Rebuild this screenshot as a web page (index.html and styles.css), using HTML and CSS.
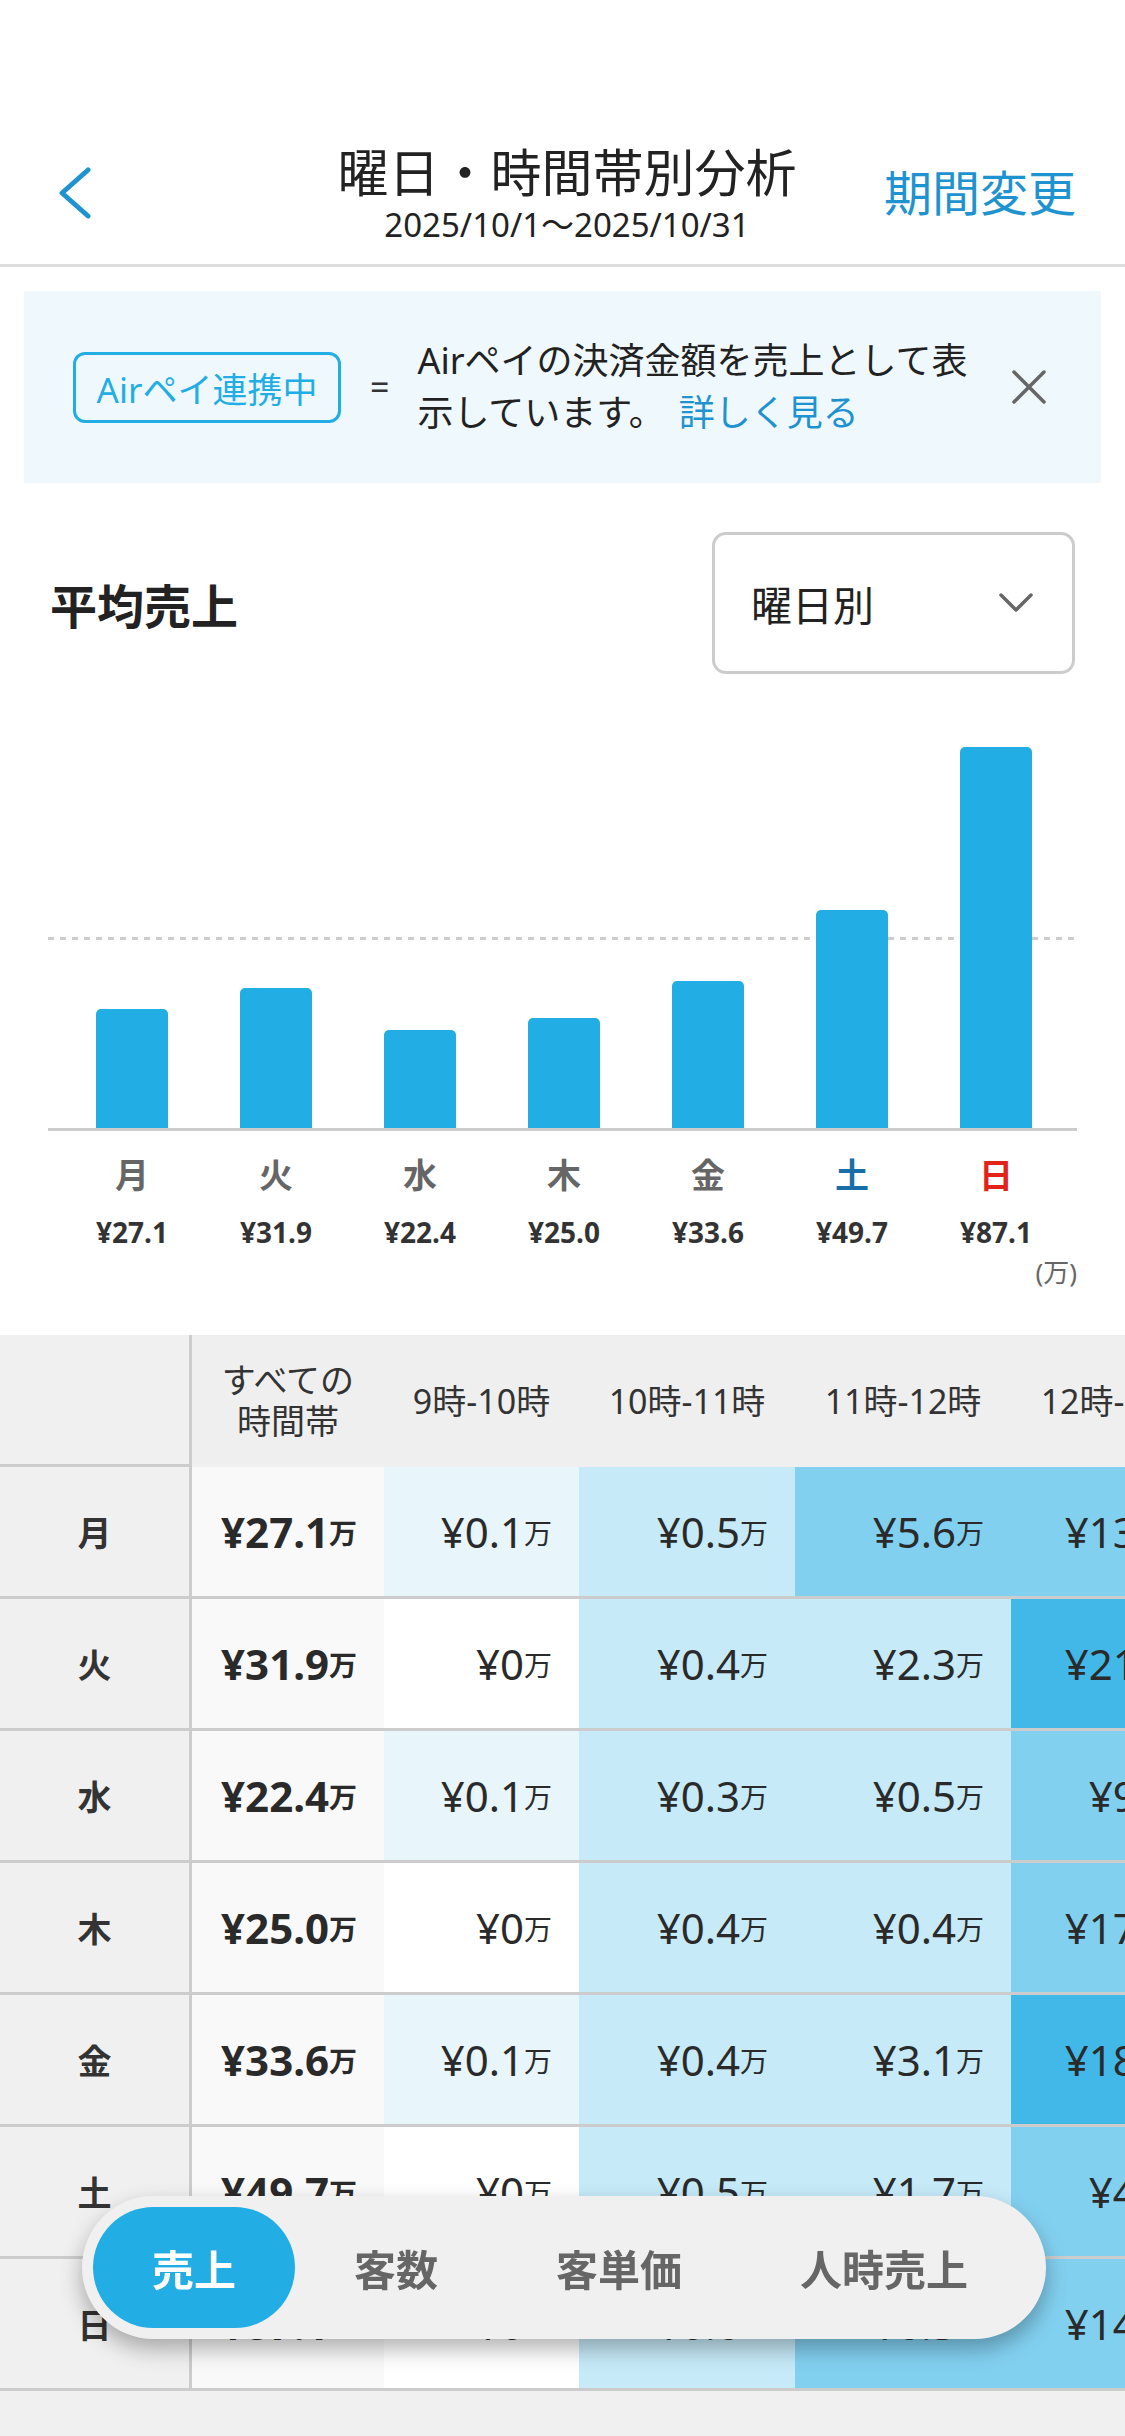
FILE: index.html
```html
<!DOCTYPE html>
<html lang="ja">
<head>
  <meta charset="utf-8">
  <meta name="viewport" content="width=device-width, initial-scale=1">
  <title>曜日・時間帯別分析</title>
  <link rel="stylesheet" href="styles.css">
</head>
<body>

<header class="nav">
  <button class="navBack" type="button" aria-label="戻る">
    <svg width="34" height="52" viewBox="0 0 34 52"><path d="M30 3 L4 26 L30 49" fill="none" stroke="#1e93cf" stroke-width="5" stroke-linecap="round" stroke-linejoin="round"/></svg>
  </button>
  <div class="navTitle">
    <h1>曜日・時間帯別分析</h1>
    <p>2025/10/1〜2025/10/31</p>
  </div>
  <a class="navAction" href="#">期間変更</a>
</header>

<div class="notice">
  <span class="badge">Airペイ連携中</span>
  <span class="eq">=</span>
  <p class="msg">Airペイの決済金額を売上として表示しています。<a class="more" href="#">詳しく見る</a></p>
  <button class="close" type="button" aria-label="閉じる">
    <svg width="36" height="34" viewBox="0 0 36 34"><path d="M3 2 L33 32 M33 2 L3 32" stroke="#666" stroke-width="3.5" stroke-linecap="round"/></svg>
  </button>
</div>

<div class="secHead">
  <h2>平均売上</h2>
  <div class="select">
    <span>曜日別</span>
    <svg width="36" height="22" viewBox="0 0 36 22"><path d="M3 3 L18 18 L33 3" fill="none" stroke="#666" stroke-width="3.5" stroke-linecap="round" stroke-linejoin="round"/></svg>
  </div>
</div>

<div class="chart">
  <div class="plot">
    <div class="avgLine"></div>
    <div class="bar" style="height: 119px"></div>
    <div class="bar" style="height: 140px"></div>
    <div class="bar" style="height: 98px"></div>
    <div class="bar" style="height: 110px"></div>
    <div class="bar" style="height: 147px"></div>
    <div class="bar" style="height: 218px"></div>
    <div class="bar" style="height: 381px"></div>
  </div>
  <div class="labels">
    <div><b>月</b><span>¥27.1</span></div>
    <div><b>火</b><span>¥31.9</span></div>
    <div><b>水</b><span>¥22.4</span></div>
    <div><b>木</b><span>¥25.0</span></div>
    <div><b>金</b><span>¥33.6</span></div>
    <div><b class="sat">土</b><span>¥49.7</span></div>
    <div><b class="sun">日</b><span>¥87.1</span></div>
  </div>
  <div class="unit">(万)</div>
</div>

<div class="tableWrap">
  <div class="row head">
    <div class="day"></div>
    <div class="twoLine"><span>すべての</span><span>時間帯</span></div>
    <div>9時-10時</div>
    <div>10時-11時</div>
    <div>11時-12時</div>
    <div>12時-13時</div>
  </div>
  <div class="row">
    <div class="day">月</div>
    <div class="all">¥27.1<small>万</small></div>
    <div class="lv1">¥0.1<small>万</small></div>
    <div class="lv2">¥0.5<small>万</small></div>
    <div class="lv3">¥5.6<small>万</small></div>
    <div class="lv3">¥13.2<small>万</small></div>
  </div>
  <div class="row">
    <div class="day">火</div>
    <div class="all">¥31.9<small>万</small></div>
    <div class="lv0">¥0<small>万</small></div>
    <div class="lv2">¥0.4<small>万</small></div>
    <div class="lv2">¥2.3<small>万</small></div>
    <div class="lv4">¥21.0<small>万</small></div>
  </div>
  <div class="row">
    <div class="day">水</div>
    <div class="all">¥22.4<small>万</small></div>
    <div class="lv1">¥0.1<small>万</small></div>
    <div class="lv2">¥0.3<small>万</small></div>
    <div class="lv2">¥0.5<small>万</small></div>
    <div class="lv3">¥9.6<small>万</small></div>
  </div>
  <div class="row">
    <div class="day">木</div>
    <div class="all">¥25.0<small>万</small></div>
    <div class="lv0">¥0<small>万</small></div>
    <div class="lv2">¥0.4<small>万</small></div>
    <div class="lv2">¥0.4<small>万</small></div>
    <div class="lv3">¥17.1<small>万</small></div>
  </div>
  <div class="row">
    <div class="day">金</div>
    <div class="all">¥33.6<small>万</small></div>
    <div class="lv1">¥0.1<small>万</small></div>
    <div class="lv2">¥0.4<small>万</small></div>
    <div class="lv2">¥3.1<small>万</small></div>
    <div class="lv4">¥18.3<small>万</small></div>
  </div>
  <div class="row">
    <div class="day">土</div>
    <div class="all">¥49.7<small>万</small></div>
    <div class="lv0">¥0<small>万</small></div>
    <div class="lv2">¥0.5<small>万</small></div>
    <div class="lv2">¥1.7<small>万</small></div>
    <div class="lv3">¥4.8<small>万</small></div>
  </div>
  <div class="row">
    <div class="day">日</div>
    <div class="all">¥87.1<small>万</small></div>
    <div class="lv0">¥0<small>万</small></div>
    <div class="lv2">¥0.6<small>万</small></div>
    <div class="lv3">¥6.3<small>万</small></div>
    <div class="lv3">¥14.5<small>万</small></div>
  </div>
</div>

<nav class="tabs">
  <a class="tab active" href="#">売上</a>
  <a class="tab" href="#">客数</a>
  <a class="tab" href="#">客単価</a>
  <a class="tab" href="#">人時売上</a>
</nav>

</body>
</html>
```

FILE: styles.css
```css
* {
  box-sizing: border-box;
  }
html, body {
  margin: 0;
  padding: 0;
  }
body {
  width: 1125px;
  background: #fff;
  color: #222;
  font-family: "Noto Sans", "Noto Sans CJK JP", sans-serif;
  overflow-x: hidden;
  }
button {
  border: 0;
  background: none;
  padding: 0;
  cursor: pointer;
  }
a {
  text-decoration: none;
  color: #1e93cf;
  }

/* top navigation */
.nav {
  display: grid;
  grid-template-columns: 1fr auto 1fr;
  align-items: center;
  padding: 140px 49px 18px 58px;
  border-bottom: 3px solid #ddd;
  }
.navBack {
  justify-self: start;
  display: flex;
  }
.navTitle {
  text-align: center;
  }
.navTitle h1 {
  margin: 0;
  font-size: 51px;
  line-height: 64px;
  font-weight: 400;
  color: #222;
  }
.navTitle p {
  margin: 0;
  font-size: 33px;
  line-height: 42px;
  color: #222;
  }
.navAction {
  justify-self: end;
  font-size: 48px;
  line-height: 60px;
  }

/* Airペイ notice */
.notice {
  display: flex;
  align-items: center;
  height: 192px;
  margin: 24px 24px 0;
  padding: 0 54px 0 49px;
  background: #eff8fd;
  }
.badge {
  display: flex;
  align-items: center;
  justify-content: center;
  width: 268px;
  height: 71px;
  border: 3px solid #22aee4;
  border-radius: 12px;
  color: #22aee4;
  font-size: 35px;
  white-space: nowrap;
  }
.eq {
  margin: 0 28px 0 29px;
  font-size: 34px;
  color: #333;
  }
.msg {
  flex: 1;
  margin: 0 36px 0 0;
  font-size: 36px;
  line-height: 52px;
  color: #222;
  }
.more {
  margin-left: 14px;
  }
.close {
  display: flex;
  }

/* section title + select */
.secHead {
  display: flex;
  justify-content: space-between;
  align-items: center;
  margin-top: 49px;
  padding: 0 50px;
  }
.secHead h2 {
  margin: 0;
  font-size: 47px;
  font-weight: 700;
  color: #222;
  }
.select {
  display: flex;
  align-items: center;
  justify-content: space-between;
  width: 363px;
  height: 142px;
  padding: 0 38px 0 36px;
  border: 3px solid #ccc;
  border-radius: 14px;
  font-size: 41px;
  color: #222;
  }

/* bar chart */
.chart {
  margin: 26px 48px 0;
  }
.plot, .labels {
  display: grid;
  grid-template-columns: repeat(7, 144px);
  padding: 0 9px 0 12px;
  }
.plot {
  position: relative;
  height: 431px;
  align-items: end;
  border-bottom: 3px solid #ccc;
  }
.avgLine {
  position: absolute;
  left: 0;
  right: 0;
  bottom: 188px;
  height: 3px;
  background: repeating-linear-gradient(90deg, #ccc 0 6px, transparent 6px 12px);
  }
.bar {
  position: relative;
  justify-self: center;
  width: 72px;
  background: #22aee4;
  border-radius: 5px 5px 0 0;
  }
.labels div {
  display: flex;
  flex-direction: column;
  align-items: center;
  }
.labels b {
  margin-top: 22px;
  font-size: 34px;
  line-height: 44px;
  color: #666;
  }
.labels b.sat { color: #1a6ea8; }
.labels b.sun { color: #e2231a; }
.labels span {
  margin-top: 15px;
  font-size: 28px;
  line-height: 40px;
  font-weight: 700;
  color: #333;
  }
.unit {
  margin-top: 3px;
  text-align: right;
  font-size: 26px;
  line-height: 34px;
  color: #666;
  }

/* heat table */
.tableWrap {
  margin-top: 46px;
  padding-bottom: 300px;
  background: #f0f0f0;
  overflow: hidden;
  }
.row {
  display: grid;
  grid-template-columns: 192px 192px 195px 216px 216px 216px;
  height: 132px;
  border-bottom: 3px solid #ccc;
  }
.row > div {
  display: flex;
  align-items: center;
  justify-content: flex-end;
  padding-right: 27px;
  font-size: 42px;
  color: #2a2a2a;
  white-space: nowrap;
  }
.row small {
  font-size: 28px;
  }
.row > .day {
  justify-content: center;
  padding: 0;
  background: #f0f0f0;
  border-right: 3px solid #ccc;
  font-size: 34px;
  font-weight: 700;
  color: #333;
  }
.row > .all {
  background: #f9f9f9;
  font-weight: 700;
  }
.row.head {
  border-bottom: 0;
  background: #efefef;
  }
.row.head > div {
  justify-content: center;
  padding: 0;
  text-align: center;
  font-size: 34px;
  line-height: 41px;
  color: #333;
  }
.row.head > .twoLine {
  flex-direction: column;
  }
.row.head > .day {
  border-bottom: 3px solid #ccc;
  background: #f0f0f0;
  }
.lv0 { background: #fff; }
.lv1 { background: #e8f5fb; }
.lv2 { background: #c6eaf8; }
.lv3 { background: #82d0f0; }
.lv4 { background: #41b8e8; }

/* metric switcher */
.tabs {
  position: fixed;
  left: 82px;
  bottom: 97px;
  width: 964px;
  height: 143px;
  display: flex;
  align-items: center;
  padding: 0 11px;
  background: #f0f0f0;
  border-radius: 72px;
  box-shadow: 0 10px 22px rgba(0, 0, 0, 0.3);
  }
.tab {
  display: flex;
  align-items: center;
  height: 121px;
  padding: 0 59px;
  border-radius: 61px;
  font-size: 42px;
  font-weight: 700;
  color: #666;
  white-space: nowrap;
  }
.tab.active {
  background: #22aee4;
  color: #fff;
  }
```
